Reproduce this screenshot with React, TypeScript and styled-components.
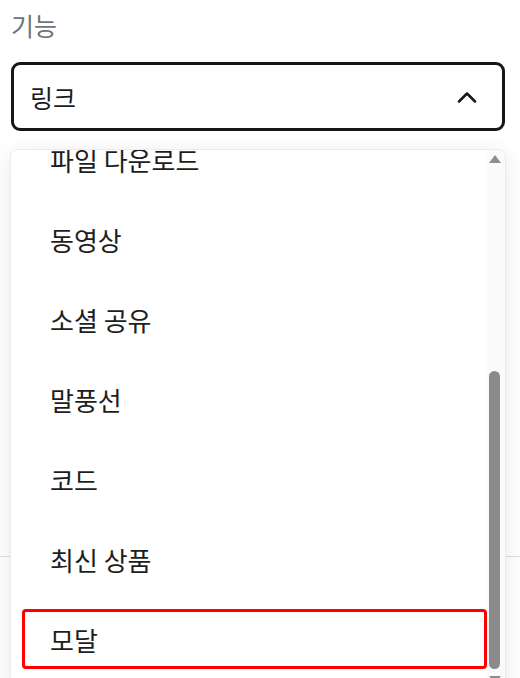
import React from 'react';
import styled, { createGlobalStyle } from 'styled-components';

const GlobalStyle = createGlobalStyle`
    html, body {
        margin: 0;
        padding: 0;
        overflow: hidden;
        background: #ffffff;
        font-family: "Noto Sans CJK KR", "Noto Sans", sans-serif;
    }
`;

const Page = styled.div`
    position: relative;
    width: 520px;
    height: 678px;
    box-sizing: border-box;
    padding: 8px 15px 0 11px;
`;

const Label = styled.div`
    font-size: 25px;
    line-height: 34px;
    color: #6f737a;
    margin-bottom: 20px;
`;

const SelectWrap = styled.div`
    position: relative;
`;

const SelectBox = styled.div`
    box-sizing: border-box;
    height: 69px;
    border: 3px solid #16171a;
    border-radius: 9px;
    padding: 0 25px 0 16px;
    display: flex;
    align-items: center;
    justify-content: space-between;
    font-size: 25px;
    color: #1b1c1f;
`;

const Divider = styled.div`
    margin-top: 425px;
    margin-left: -11px;
    margin-right: -15px;
    height: 1px;
    background: #dedfe2;
`;

const Dropdown = styled.div`
    position: absolute;
    top: 87px;
    left: -1px;
    width: 496px;
    height: 545px;
    background: #ffffff;
    border: 1px solid #ececee;
    border-radius: 7px;
    box-sizing: border-box;
    box-shadow: 0 4px 22px rgba(0, 0, 0, 0.09);
    overflow: hidden;
    display: flex;
`;

const List = styled.ul`
    list-style: none;
    margin: -30px 0 0 0;
    padding: 0;
    flex: 1;
`;

const Item = styled.li`
    height: 80px;
    box-sizing: border-box;
    padding: 9px 0 11px 11px;
    display: flex;
`;

const ItemInner = styled.div<{ $focused?: boolean }>`
    flex: 1;
    box-sizing: border-box;
    display: flex;
    align-items: center;
    padding-left: ${(p) => (p.$focused ? '25px' : '28px')};
    border: ${(p) => (p.$focused ? '3px solid #ff0000' : 'none')};
    border-radius: 4px;
    font-size: 26px;
    color: #1d1e21;
`;

const ScrollTrack = styled.div`
    position: relative;
    width: 18px;
    background: #fafafa;
    flex-shrink: 0;
`;

const ArrowUp = styled.div`
    position: absolute;
    top: 5px;
    left: 2px;
    width: 0;
    height: 0;
    border-left: 6px solid transparent;
    border-right: 6px solid transparent;
    border-bottom: 8px solid #8d8d8d;
`;

const Thumb = styled.div`
    position: absolute;
    top: 221px;
    left: 2px;
    width: 11px;
    height: 298px;
    border-radius: 6px;
    background: #8b8b8b;
`;

const ArrowDown = styled.div`
    position: absolute;
    top: 526px;
    left: 2px;
    width: 0;
    height: 0;
    border-left: 6px solid transparent;
    border-right: 6px solid transparent;
    border-top: 8px solid #8d8d8d;
`;

const Chevron = () => (
    <svg width="20" height="12" viewBox="0 0 20 12" fill="none">
        <polyline
            points="2,10.5 10,2.5 18,10.5"
            stroke="#16171a"
            strokeWidth="2.5"
            strokeLinecap="round"
            strokeLinejoin="round"
        />
    </svg>
);

const items = ['파일 다운로드', '동영상', '소셜 공유', '말풍선', '코드', '최신 상품', '모달'];

export default function App() {
    return (
        <>
            <GlobalStyle />
            <Page>
                <Label>기능</Label>
                <SelectWrap>
                    <SelectBox>
                        <span>링크</span>
                        <Chevron />
                    </SelectBox>
                    <Divider />
                    <Dropdown>
                        <List>
                            {items.map((name) => (
                                <Item key={name}>
                                    <ItemInner $focused={name === '모달'}>{name}</ItemInner>
                                </Item>
                            ))}
                        </List>
                        <ScrollTrack>
                            <ArrowUp />
                            <Thumb />
                            <ArrowDown />
                        </ScrollTrack>
                    </Dropdown>
                </SelectWrap>
            </Page>
        </>
    );
}
